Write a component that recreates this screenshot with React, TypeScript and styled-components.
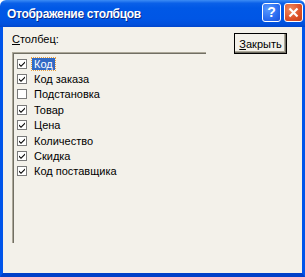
import React, { useState } from "react";
import styled, { createGlobalStyle } from "styled-components";

const GlobalStyle = createGlobalStyle`
  html, body {
    margin: 0;
    padding: 0;
    background: #ffffff;
  }
`;

const columns = [
  { name: "Код", checked: true },
  { name: "Код заказа", checked: true },
  { name: "Подстановка", checked: false },
  { name: "Товар", checked: true },
  { name: "Цена", checked: true },
  { name: "Количество", checked: true },
  { name: "Скидка", checked: true },
  { name: "Код поставщика", checked: true },
];

const CheckMark = ({ checked }: { checked: boolean }) => (
  <svg width="10" height="10" viewBox="0 0 10 10">
    <rect x="0.5" y="0.5" width="9" height="9" fill="#ffffff" stroke="#7a7a7a" />
    {checked && (
      <path d="M2 4.5 L4 6.5 L8 2.5 L8 4 L4 8 L2 6 Z" fill="#000000" />
    )}
  </svg>
);

export default function App() {
  const [items, setItems] = useState(columns);
  const [selected, setSelected] = useState(0);

  const toggle = (index: number) => {
    setItems(items.map((it, i) => (i === index ? { ...it, checked: !it.checked } : it)));
  };

  return (
    <>
      <GlobalStyle />
      <Window>
        <TitleBar>
          <Title>Отображение столбцов</Title>
          <TitleButtons>
            <HelpButton>?</HelpButton>
            <CloseButton>
              <svg width="11" height="11" viewBox="0 0 11 11">
                <path d="M1.5 1.5 L9.5 9.5 M9.5 1.5 L1.5 9.5" stroke="#ffffff" strokeWidth="2.2" />
              </svg>
            </CloseButton>
          </TitleButtons>
        </TitleBar>

        <Body>
          <LeftColumn>
            <Label>
              <u>С</u>толбец:
            </Label>
            <ListBox>
              {items.map((item, index) => (
                <Row key={item.name} onClick={() => setSelected(index)}>
                  <BoxWrap onClick={() => toggle(index)}>
                    <CheckMark checked={item.checked} />
                  </BoxWrap>
                  <ItemText selected={selected === index}>{item.name}</ItemText>
                </Row>
              ))}
            </ListBox>
          </LeftColumn>
          <DefaultButton>
            <u>З</u>акрыть
          </DefaultButton>
        </Body>
      </Window>
    </>
  );
}

const Window = styled.div`
  width: 305px;
  height: 277px;
  display: flex;
  flex-direction: column;
  font-family: "Liberation Sans", Arial, sans-serif;
  overflow: hidden;
`;

const TitleBar = styled.div`
  height: 27px;
  flex-shrink: 0;
  display: flex;
  align-items: center;
  justify-content: space-between;
  padding: 0 4px 0 7px;
  border-radius: 6px 6px 0 0;
  background: linear-gradient(
    to bottom,
    #3c8cf5 0%,
    #0a60e8 12%,
    #0058e6 30%,
    #0056e5 70%,
    #0150dc 90%,
    #0146cc 100%
  );
`;

const Title = styled.span`
  color: #ffffff;
  font-family: "Liberation Sans", Arial, sans-serif;
  font-weight: bold;
  font-size: 12px;
  letter-spacing: -0.3px;
  text-shadow: 1px 1px 0 #0a2a8a;
`;

const TitleButtons = styled.div`
  display: flex;
  gap: 3px;
  margin-top: -3px;
  margin-right: -2px;
`;

const TitleButton = styled.div`
  width: 17px;
  height: 17px;
  border: 1px solid #ffffff;
  border-radius: 3px;
  display: flex;
  align-items: center;
  justify-content: center;
  color: #ffffff;
  font-family: "Liberation Sans", Arial, sans-serif;
  font-weight: bold;
  font-size: 14px;
`;

const HelpButton = styled(TitleButton)`
  background: radial-gradient(circle at 30% 30%, #5a9bff 0%, #2a6cf0 60%, #1b50d8 100%);
`;

const CloseButton = styled(TitleButton)`
  background: radial-gradient(circle at 30% 30%, #f08a5e 0%, #dc5028 60%, #c2401a 100%);
`;

const Body = styled.div`
  flex: 1;
  display: flex;
  background: #f3f1ea;
  border-left: 3px solid #0055ea;
  border-right: 3px solid #0055ea;
  border-bottom: 4px solid #0040c8;
  padding: 6px 0 0 9px;
`;

const LeftColumn = styled.div`
  display: flex;
  flex-direction: column;
  width: 194px;
`;

const Label = styled.div`
  font-size: 11px;
  color: #000000;
  height: 13px;
  line-height: 13px;
  margin-bottom: 6px;

  u {
    text-decoration: underline;
  }
`;

const ListBox = styled.div`
  height: 191px;
  box-sizing: border-box;
  border-top: 1px solid #aca899;
  border-left: 1px solid #aca899;
  box-shadow: inset 1px 1px 0 #716f64;
  padding: 3px 0 0 4px;
  display: flex;
  flex-direction: column;
`;

const Row = styled.div`
  height: 15.4px;
  display: flex;
  align-items: center;
  gap: 5px;
  font-size: 11px;
  cursor: default;
`;

const BoxWrap = styled.span`
  display: flex;
  width: 10px;
  height: 10px;
`;

const ItemText = styled.span<{ selected: boolean }>`
  padding: 0 2px;
  line-height: 12px;
  color: ${({ selected }) => (selected ? "#ffffff" : "#000000")};
  background: ${({ selected }) => (selected ? "#316ac5" : "transparent")};
  outline: ${({ selected }) => (selected ? "1px dotted #e8a040" : "none")};
`;

const DefaultButton = styled.button`
  margin-left: 28px;
  width: 53px;
  height: 21px;
  background: #f3f1ea;
  border: 1px solid #000000;
  box-shadow: inset -1px -1px 0 #716f64, inset -2px -2px 0 #aca899;
  font-family: "Liberation Sans", Arial, sans-serif;
  font-size: 11px;
  color: #000000;
  padding: 0;
  cursor: pointer;
`;
